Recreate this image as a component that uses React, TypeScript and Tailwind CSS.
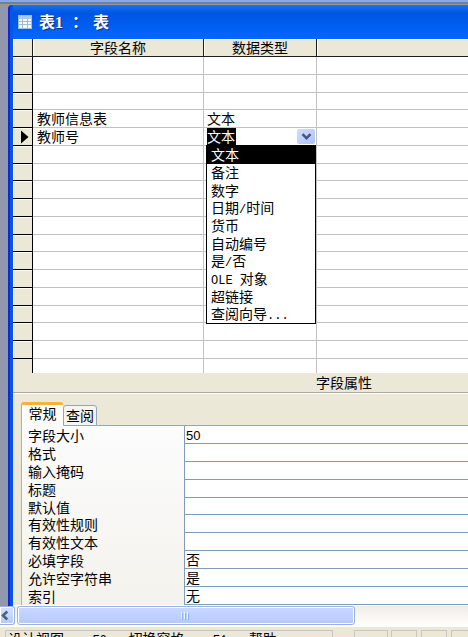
import { useState } from 'react';

const TYPES = ['文本', '备注', '数字', '日期/时间', '货币', '自动编号', '是/否', 'OLE 对象', '超链接', '查阅向导...'];

const PROPS = [
  { id: 'size', label: '字段大小', value: '50' },
  { id: 'format', label: '格式', value: '' },
  { id: 'mask', label: '输入掩码', value: '' },
  { id: 'caption', label: '标题', value: '' },
  { id: 'default', label: '默认值', value: '' },
  { id: 'rule', label: '有效性规则', value: '' },
  { id: 'ruletext', label: '有效性文本', value: '' },
  { id: 'required', label: '必填字段', value: '否' },
  { id: 'empty', label: '允许空字符串', value: '是' },
  { id: 'index', label: '索引', value: '无' },
];

// 17 行 + 底部露出一半的一行
const ROWS = Array.from({ length: 18 }, (_, i) => i);
const NAMES: Record<number, string> = { 3: '教师信息表', 4: '教师号' };

// 西文用半角等宽字体，中文保持 14px
function Mixed({ text }: { text: string }) {
  const parts = text.split(/([\x20-\x7e]+)/).filter(Boolean);
  return (
    <>
      {parts.map((p, i) =>
        /^[\x20-\x7e]/.test(p) ? (
          <span key={i} className="font-['Liberation_Mono',monospace] text-[12px]">{p}</span>
        ) : (
          p
        )
      )}
    </>
  );
}

function rowHeight(i: number) {
  if (i === 17) return 'h-[14px]';
  return i % 4 === 2 ? 'h-[17px]' : 'h-[18px]';
}

function TypePicker() {
  const [value, setValue] = useState('文本');
  const [open, setOpen] = useState(true);

  return (
    <div className="relative flex h-[17px] items-center justify-between pl-[3px]">
      <select
        aria-label="数据类型"
        value={value}
        onChange={(e) => setValue(e.target.value)}
        className="h-[17px] w-[29px] appearance-none bg-black text-[14px] leading-[17px] text-white outline-none"
      >
        {TYPES.map((t) => (
          <option key={t}>{t}</option>
        ))}
      </select>
      <button
        aria-label="展开列表"
        onClick={() => setOpen(!open)}
        className="mr-px flex h-[15px] w-[18px] items-center justify-center rounded-[2px] bg-linear-to-br from-[#d0dcff] to-[#adc4f8]"
      >
        <svg width="11" height="8" viewBox="0 0 11 8" fill="none">
          <path d="M1.5 1.2 L5.5 5.2 L9.5 1.2" stroke="#46597f" strokeWidth="2.6" />
        </svg>
      </button>
      {open && (
        <ul
          role="listbox"
          aria-label="数据类型列表"
          className="absolute top-[17px] left-[2px] z-10 grid h-[179px] w-[110px] auto-rows-fr border border-black bg-white"
        >
          {TYPES.map((t) => (
            <li key={t} role="option" aria-selected={t === value} className="flex">
              <button
                onClick={() => setValue(t)}
                className={
                  t === value
                    ? 'flex-1 whitespace-pre bg-black pl-[4px] text-left leading-[17px] text-white'
                    : 'flex-1 whitespace-pre pl-[4px] text-left leading-[17px]'
                }
              >
                <Mixed text={t} />
              </button>
            </li>
          ))}
        </ul>
      )}
    </div>
  );
}

function FieldTable() {
  const head = 'border-r border-b border-[#1c1c1c] bg-[#ebe8d8] p-0 font-normal shadow-[inset_1px_1px_0_#fbfaf3]';
  const cell = 'border-r border-b border-[#c2c2c2] p-0';
  return (
    <table className="w-full table-fixed border-separate border-spacing-0 bg-white leading-[17px]">
      <colgroup>
        <col className="w-[20px]" />
        <col className="w-[171px]" />
        <col className="w-[113px]" />
        <col />
      </colgroup>
      <thead>
        <tr className="h-[18px]">
          <th className={head}></th>
          <th className={head}>字段名称</th>
          <th className={head}>数据类型</th>
          <th className="border-b border-[#1c1c1c] bg-[#ebe8d8] p-0 shadow-[inset_1px_1px_0_#fbfaf3]"></th>
        </tr>
      </thead>
      <tbody>
        {ROWS.map((i) => (
          <tr key={i} className={rowHeight(i)}>
            <td className={i === 17 ? 'border-r border-black bg-[#ebe8d8] p-0' : 'border-r border-b border-black bg-[#ebe8d8] p-0 shadow-[inset_1px_1px_0_#fbfaf3]'}>
              {i === 4 && (
                <svg className="ml-[8px] block" width="8" height="14" viewBox="0 0 8 14">
                  <path d="M0 0.5 L7.5 7 L0 13.5 Z" fill="#000" />
                </svg>
              )}
            </td>
            <td className={i === 17 ? 'border-r border-[#c2c2c2] p-0' : cell}>
              {NAMES[i] && <span className="block pl-[4px]">{NAMES[i]}</span>}
            </td>
            <td className={i === 17 ? 'border-r border-[#c2c2c2] p-0' : cell}>
              {i === 3 && <span className="block pl-[3px]">文本</span>}
              {i === 4 && <TypePicker />}
            </td>
            <td className={i === 17 ? 'p-0' : 'border-b border-[#c2c2c2] p-0'}></td>
          </tr>
        ))}
      </tbody>
    </table>
  );
}

function Properties() {
  return (
    <section className="bg-[#ebe8d8] pl-[8px]">
      {/* 选项卡 */}
      <div role="tablist" className="flex items-end pt-[8px]">
        <button
          role="tab"
          aria-selected="true"
          className="h-[24px] w-[42px] rounded-t-[3px] border-t-3 border-l border-t-[#f9b233] border-l-[#a4b0b8] bg-[#fcfcfb] pb-[4px] text-center leading-[17px]"
        >
          常规
        </button>
        <button
          role="tab"
          aria-selected="false"
          className="h-[21px] w-[34px] rounded-t-[3px] border border-[#91a7b4] bg-[#f6f5f0] text-center leading-[17px]"
        >
          查阅
        </button>
        <div className="h-px flex-1 bg-[#91a7b4]"></div>
      </div>
      <div className="border-l border-[#a9b2b8] bg-linear-to-b from-[#fcfcfd] to-[#f3f2ec]">
        <div className="grid h-[179px] auto-rows-fr">
          {PROPS.map((p) => (
            <div key={p.id} className="flex">
              <label htmlFor={p.id} className="w-[162px] pl-[6px] leading-[18px]">{p.label}</label>
              <input
                id={p.id}
                defaultValue={p.value}
                className={
                  p.id === 'size'
                    ? "min-w-0 flex-1 border-b border-l border-[#7f9db9] bg-white pt-[3px] pl-px font-['Liberation_Sans',sans-serif] text-[13px] leading-[14px] outline-none"
                    : 'min-w-0 flex-1 border-b border-l border-[#7f9db9] bg-white pl-px leading-[17px] outline-none'
                }
              />
            </div>
          ))}
        </div>
      </div>
    </section>
  );
}

function ScrollBar() {
  return (
    <div className="flex h-[19px] shrink-0 bg-linear-to-b from-[#efede8] to-[#fefefb]">
      <button
        aria-label="向左滚动"
        className="flex w-[15px] items-center rounded-r-[3px] border-y border-r border-[#98b2e6] bg-linear-to-b from-[#d5e0ff] to-[#b5caf8] shadow-[inset_0_0_0_1px_#fff]"
      >
        <svg width="9" height="11" viewBox="0 0 9 11" fill="none">
          <path d="M7.3 1.5 L3 5.5 L7.3 9.5" stroke="#4d6185" strokeWidth="2.6" />
        </svg>
      </button>
      <div className="ml-[2px] flex w-[338px] items-center justify-center rounded-[3px] border border-[#98b2e6] bg-linear-to-b from-[#cbd8ff] to-[#b4c9fa] shadow-[inset_0_0_0_1px_#fff]">
        <svg width="10" height="8" viewBox="0 0 10 8">
          <path d="M0.5 0 V7 M3.5 0 V7 M6.5 0 V7" stroke="#eef4ff" />
          <path d="M1.5 1 V8 M4.5 1 V8 M7.5 1 V8" stroke="#8cb0f8" />
        </svg>
      </div>
    </div>
  );
}

function StatusBar() {
  const box = 'h-[24px] shrink-0 border border-[#c8c7bf]';
  return (
    <footer className="flex shrink-0 border-t-2 border-white bg-[#ebe8d8] pt-[3px] pl-[5px]">
      <div className={`${box} w-[328px] overflow-hidden pl-[2px] leading-[15px] whitespace-pre`}>
        <Mixed text="设计视图。  F6 = 切换窗格。  F1 = 帮助。" />
      </div>
      <div className={`${box} ml-[21px] w-[34px]`}></div>
      <div className={`${box} ml-[3px] w-[26px]`}></div>
      <div className={`${box} ml-[4px] w-[26px]`}></div>
      <div className={`${box} ml-[4px] w-[34px]`}></div>
    </footer>
  );
}

export default function App() {
  return (
    <div className="flex h-screen flex-col overflow-hidden bg-[#ebe8d8] font-['Noto_Sans_CJK_SC',sans-serif] text-[14px] text-black">
      {/* 上方工具栏的下边缘 */}
      <div className="h-[5px] shrink-0 border-t-2 border-b border-t-[#87a9e5] border-b-[#a09a8a] bg-[#6283b2]"></div>

      <main className="shrink-0 bg-[#9297ad] pl-[8px]">
        <div className="rounded-tl-[4px] border-l-2 border-[#1628cc] bg-[#0855e8] pl-[3px]">
          <header className="flex h-[34px] items-center gap-[7px] bg-linear-to-b from-[#1674ee] via-[#0054e3] via-25% to-[#0068ff] pl-[5px] text-white">
            <svg width="14" height="14" viewBox="0 0 14 14">
              <rect x="0.5" y="0.5" width="13" height="13" fill="#f4f8ff" stroke="#9dbce8" />
              <rect x="1" y="1" width="12" height="3" fill="#a9c8f2" />
              <path d="M1 6.5 H13 M1 9.5 H13 M4.5 4 V13 M9.5 4 V13" stroke="#a8b8cc" />
            </svg>
            <h1 className="flex text-[16px] leading-[20px] font-bold [text-shadow:1px_1px_0_#0a2f86]">
              <span className="w-[29px]">
                表<span className="font-['Liberation_Serif',serif]">1</span>
              </span>
              <span className="w-[25px] font-['Noto_Sans_CJK_JP',sans-serif]">：</span>
              <span>表</span>
            </h1>
          </header>
          <FieldTable />
          <div className="border-b border-[#aca899] bg-[#ebe8d8] pl-[303px] leading-[19px]">字段属性</div>
          <div className="h-px bg-white"></div>
          <Properties />
          <div className="h-px bg-white"></div>
        </div>
      </main>
      <ScrollBar />
      <StatusBar />
    </div>
  );
}
